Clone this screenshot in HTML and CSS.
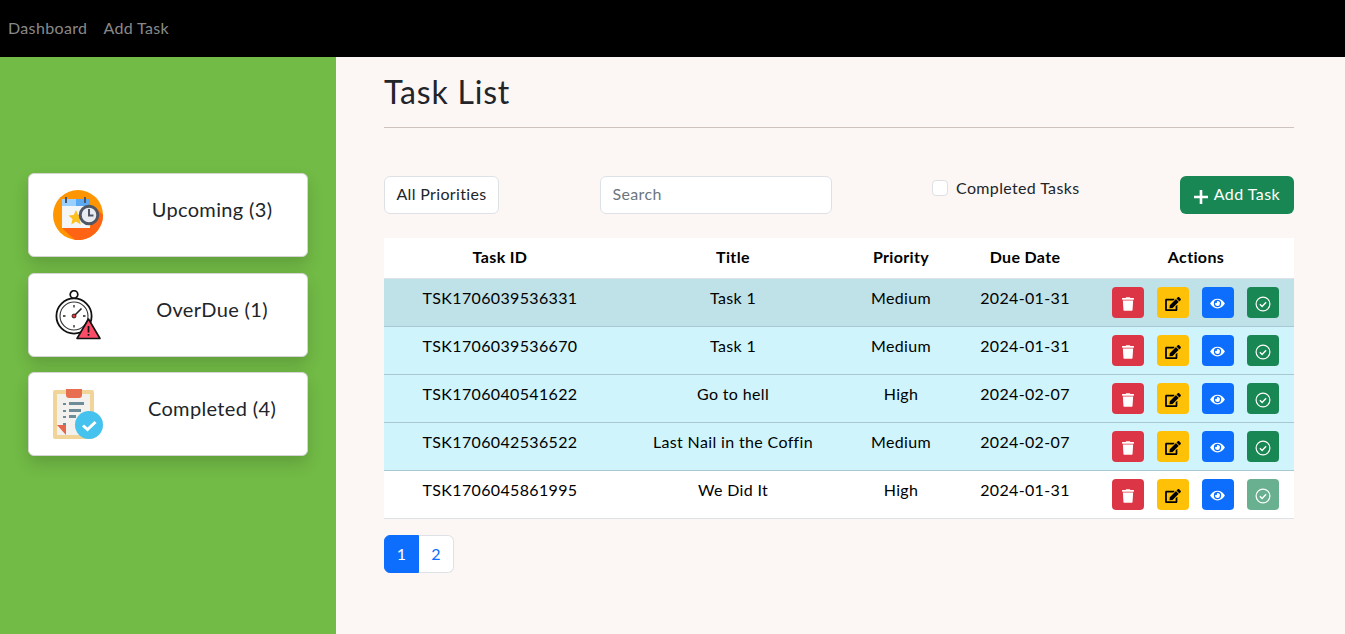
FILE: index.html
```html
<!DOCTYPE HTML>
<html>
	<head>
		<title>Task List</title>
		<link rel="stylesheet" href="styles.css">
	</head>
	<body>
		<svg class="sprites" width="0" height="0">
			<symbol id="ic-trash" viewBox="0 0 448 512"><path d="M432 32H312l-9.4-18.7A24 24 0 0 0 281.1 0H166.8a23.72 23.72 0 0 0-21.4 13.3L136 32H16A16 16 0 0 0 0 48v32a16 16 0 0 0 16 16h416a16 16 0 0 0 16-16V48a16 16 0 0 0-16-16zM53.2 467a48 48 0 0 0 47.9 45h245.8a48 48 0 0 0 47.9-45L416 128H32z"/></symbol>
			<symbol id="ic-edit" viewBox="0 0 576 512"><path d="M402.6 83.2l90.2 90.2c3.8 3.8 3.8 10 0 13.8L274.4 405.6l-92.8 10.3c-12.4 1.4-22.9-9.1-21.5-21.5l10.3-92.8L388.8 83.2c3.8-3.8 10-3.8 13.8 0zm162-22.9l-48.8-48.8c-15.2-15.2-39.9-15.2-55.2 0l-35.4 35.4c-3.8 3.8-3.8 10 0 13.8l90.2 90.2c3.8 3.8 10 3.8 13.8 0l35.4-35.4c15.2-15.3 15.2-40 0-55.2zM384 346.2V448H64V128h229.8c3.2 0 6.2-1.3 8.5-3.5l40-40c7.6-7.6 2.2-20.5-8.5-20.5H48C21.5 64 0 85.5 0 112v352c0 26.5 21.5 48 48 48h352c26.5 0 48-21.5 48-48V306.2c0-10.7-12.9-16-20.5-8.5l-40 40c-2.2 2.3-3.5 5.3-3.5 8.5z"/></symbol>
			<symbol id="ic-eye" viewBox="0 0 576 512"><path d="M572.52 241.4C518.29 135.59 410.93 64 288 64S57.68 135.64 3.48 241.41a32.35 32.35 0 0 0 0 29.19C57.71 376.41 165.07 448 288 448s230.32-71.64 284.52-177.41a32.35 32.35 0 0 0 0-29.19zM288 400a144 144 0 1 1 144-144 143.93 143.93 0 0 1-144 144zm0-240a95.31 95.31 0 0 0-25.31 3.79 47.85 47.85 0 0 1-66.9 66.9A95.78 95.78 0 1 0 288 160z"/></symbol>
			<symbol id="ic-check" viewBox="0 0 16 16"><circle cx="8" cy="8" r="6.9" fill="none" stroke="currentColor" stroke-width="1.2"/><path d="M4.9 8.2l2.2 2.2 4-4.2" fill="none" stroke="currentColor" stroke-width="1.4"/></symbol>
		</svg>

		<nav class="topbar">
			<a href="#">Dashboard</a>
			<a href="#">Add Task</a>
		</nav>

		<div class="layout">
			<aside class="sidebar">
				<div class="stat-card">
					<svg class="stat-icon" viewBox="0 0 50 50">
						<circle cx="25" cy="25" r="25" fill="#ff9500"/>
						<path d="M9 38L22 50A25 25 0 0 0 50 25L42 17L37 38z" fill="#ff6414"/>
						<rect x="9" y="9" width="28" height="29" fill="#f4f5f7"/>
						<rect x="9" y="9" width="14" height="7" fill="#9ad0ff"/>
						<rect x="23" y="9" width="14" height="7" fill="#5aa9f2"/>
						<rect x="12" y="7" width="2" height="6" fill="#4a5568"/>
						<rect x="31" y="7" width="2" height="6" fill="#4a5568"/>
						<path d="M23 20l2.200 5 5.300.5-4 3.600 1.200 5.300-4.700-2.800-4.700 2.800 1.200-5.300-4-3.600 5.300-.5z" fill="#fdbf1e"/>
						<circle cx="36" cy="25" r="8.800" fill="#e8ecf0" stroke="#4e5763" stroke-width="3"/>
						<path d="M36 19v6.500h4.500" fill="none" stroke="#4e5763" stroke-width="2"/>
					</svg>
					<span class="stat-label">Upcoming (3)</span>
				</div>
				<div class="stat-card">
					<svg class="stat-icon" viewBox="0 0 50 50">
						<circle cx="21" cy="4.500" r="3.800" fill="#fff" stroke="#111" stroke-width="1.700"/>
						<circle cx="21" cy="26" r="17.600" fill="#fff" stroke="#111" stroke-width="1.800"/>
						<circle cx="21" cy="26" r="14" fill="#fff" stroke="#333" stroke-width="1.100"/>
						<path d="M21 15v2.500M21 35v2.500M10 26h2.500M30 26h2.500" stroke="#222" stroke-width="1.300"/>
						<path d="M21 26l7.500-7.500" stroke="#222" stroke-width="1.600"/>
						<circle cx="21" cy="26" r="2" fill="#e33" stroke="#111" stroke-width=".8"/>
						<path d="M35.500 29L47 48.500H24z" fill="#fb4d67" stroke="#111" stroke-width="1.600" stroke-linejoin="round"/>
						<path d="M35.500 36v6.500M35.500 44v1.800" stroke="#111" stroke-width="1.700"/>
					</svg>
					<span class="stat-label">OverDue (1)</span>
				</div>
				<div class="stat-card">
					<svg class="stat-icon" viewBox="0 0 50 50">
						<rect x="0" y="1" width="41" height="49" rx="2" fill="#f1d498"/>
						<rect x="4" y="5" width="33" height="41" fill="#f3f1ee"/>
						<path d="M13 0h16v6a3 3 0 0 1-3 3H16a3 3 0 0 1-3-3z" fill="#e86e52"/>
						<path d="M10 14h3v2h-3zM10 21h3v2h-3zM10 27h3v2h-3zM10 34h3v2h-3z" fill="#6d8c9a"/>
						<path d="M16 13h15v3H16zM16 20h12v3H16zM16 26h7v3h-7z" fill="#6d8c9a"/>
						<path d="M4 36h9v10z" fill="#e5664d"/>
						<circle cx="36" cy="36" r="14" fill="#46c2ee"/>
						<path d="M30 36.500l4.500 4 8-7.500" fill="none" stroke="#fff" stroke-width="3"/>
					</svg>
					<span class="stat-label">Completed (4)</span>
				</div>
			</aside>

			<main class="content">
				<h1 class="page-title">Task List</h1>
				<hr class="rule">

				<div class="toolbar">
					<button class="plain-btn">All Priorities</button>
					<input class="search" type="text" placeholder="Search">
					<label class="check-line"><span class="check-box"></span>Completed Tasks</label>
					<button class="add-btn"><svg class="plus" viewBox="0 0 14 14"><path d="M7 0v14M0 7h14"/></svg>Add Task</button>
				</div>

				<table class="tasks">
					<colgroup>
						<col class="c-id"><col class="c-title"><col class="c-pri"><col class="c-due"><col>
					</colgroup>
					<thead>
						<tr><th>Task ID</th><th>Title</th><th>Priority</th><th>Due Date</th><th>Actions</th></tr>
					</thead>
					<tbody>
						<tr class="row-hover">
							<td>TSK1706039536331</td><td>Task 1</td><td>Medium</td><td>2024-01-31</td>
							<td><div class="actions">
								<button class="act red"><svg class="i-trash"><use href="#ic-trash"/></svg></button>
								<button class="act yellow"><svg class="i-edit"><use href="#ic-edit"/></svg></button>
								<button class="act blue"><svg class="i-eye"><use href="#ic-eye"/></svg></button>
								<button class="act green"><svg class="i-check"><use href="#ic-check"/></svg></button>
							</div></td>
						</tr>
						<tr class="row-info">
							<td>TSK1706039536670</td><td>Task 1</td><td>Medium</td><td>2024-01-31</td>
							<td><div class="actions">
								<button class="act red"><svg class="i-trash"><use href="#ic-trash"/></svg></button>
								<button class="act yellow"><svg class="i-edit"><use href="#ic-edit"/></svg></button>
								<button class="act blue"><svg class="i-eye"><use href="#ic-eye"/></svg></button>
								<button class="act green"><svg class="i-check"><use href="#ic-check"/></svg></button>
							</div></td>
						</tr>
						<tr class="row-info">
							<td>TSK1706040541622</td><td>Go to hell</td><td>High</td><td>2024-02-07</td>
							<td><div class="actions">
								<button class="act red"><svg class="i-trash"><use href="#ic-trash"/></svg></button>
								<button class="act yellow"><svg class="i-edit"><use href="#ic-edit"/></svg></button>
								<button class="act blue"><svg class="i-eye"><use href="#ic-eye"/></svg></button>
								<button class="act green"><svg class="i-check"><use href="#ic-check"/></svg></button>
							</div></td>
						</tr>
						<tr class="row-info">
							<td>TSK1706042536522</td><td>Last Nail in the Coffin</td><td>Medium</td><td>2024-02-07</td>
							<td><div class="actions">
								<button class="act red"><svg class="i-trash"><use href="#ic-trash"/></svg></button>
								<button class="act yellow"><svg class="i-edit"><use href="#ic-edit"/></svg></button>
								<button class="act blue"><svg class="i-eye"><use href="#ic-eye"/></svg></button>
								<button class="act green"><svg class="i-check"><use href="#ic-check"/></svg></button>
							</div></td>
						</tr>
						<tr>
							<td>TSK1706045861995</td><td>We Did It</td><td>High</td><td>2024-01-31</td>
							<td><div class="actions">
								<button class="act red"><svg class="i-trash"><use href="#ic-trash"/></svg></button>
								<button class="act yellow"><svg class="i-edit"><use href="#ic-edit"/></svg></button>
								<button class="act blue"><svg class="i-eye"><use href="#ic-eye"/></svg></button>
								<button class="act green done"><svg class="i-check"><use href="#ic-check"/></svg></button>
							</div></td>
						</tr>
					</tbody>
				</table>

				<div class="pager">
					<a class="page on" href="#">1</a>
					<a class="page" href="#">2</a>
				</div>
			</main>
		</div>
	</body>
</html>
```

FILE: styles.css
```css
* {box-sizing:border-box;}
body {margin:0; height:634px; overflow:hidden; font:16px/24px "Lato", "Open Sans", sans-serif; letter-spacing:.35px; color:#212529; background-color:#fcf7f4;}

.sprites {position:absolute;}

.topbar {display:flex; gap:16px; height:57px; padding:16px 8px; background-color:#000;}
.topbar a {color:rgba(255,255,255,.55); text-decoration:none;}

.layout {display:flex; height:577px;}

.sidebar {width:336px; padding:116px 28px 0; background-color:#72bb46;}

.stat-card {display:flex; align-items:flex-start; height:84px; margin-bottom:15.500px; padding:16px 24px 0; background-color:#fff; border:1px solid #d5d5d5; border-radius:6px; box-shadow:0 8px 16px rgba(0,0,0,.15);}
.stat-icon {width:50px; height:50px; flex:none;}
.stat-label {flex:1; padding:7px 0 0 14px; margin-right:-24px; text-align:center; font-size:20px; color:#212529;}

.content {flex:1; padding:0 51px 0 48px;}

.page-title {margin:16px 0 0; font-size:32px; line-height:38px; font-weight:400; letter-spacing:.8px;}
.rule {height:1px; margin:16px 0 48px; border:0; background-color:#cdc4bf;}

.toolbar {display:flex; justify-content:space-between; align-items:flex-start; margin-bottom:24px;}
.plain-btn {width:115px; height:38px; padding:0 0 2px; font:inherit; letter-spacing:inherit; color:#212529; background-color:#fff; border:1px solid #dee2e6; border-radius:6px;}
.search {width:232px; height:38px; padding:3px 12px 7px; font:inherit; letter-spacing:inherit; color:#212529; background-color:#fff; border:1px solid #dee2e6; border-radius:6px;}
.search::placeholder {color:#6c757d;}
.check-line {display:flex; align-items:flex-start; gap:8px; color:#212529;}
.check-box {width:16px; height:16px; margin-top:4px; background-color:#fff; border:1px solid #dee2e6; border-radius:4px;}
.add-btn {display:flex; align-items:center; justify-content:center; width:114px; height:38px; padding:0 0 2px; font:inherit; letter-spacing:.45px; color:#fff; background-color:#198754; border:0; border-radius:6px;}
.plus {width:14px; height:14px; margin:5px 6px 0 0; fill:none; stroke:#fff; stroke-width:2.600;}

.tasks {width:100%; border-collapse:collapse; table-layout:fixed; color:#000;}
.c-id {width:232px;}
.c-title {width:234px;}
.c-pri {width:102px;}
.c-due {width:146px;}
.tasks th {height:40px; padding:7px 8px 8px; text-align:center; vertical-align:top; font-weight:700; background-color:#fff; border-bottom:1px solid #dee2e6;}
.tasks td {height:48px; padding:7px 8px 8px; text-align:center; vertical-align:top; background-color:#fff; border-bottom:1px solid #dee2e6;}
.row-hover td {background-color:#bfe1e8; border-bottom-color:#a8c9d1;}
.row-info td {background-color:#cff4fc; border-bottom-color:#a8c9d1;}

.actions {display:flex; justify-content:center; gap:13px; margin:1px 2px 0 0;}
.act {display:flex; align-items:center; justify-content:center; width:32px; height:31px; padding:3px 0 0; border:0; border-radius:4px;}
.red {background-color:#dc3545; color:#fff;}
.yellow {background-color:#ffc107; color:#000;}
.blue {background-color:#0d6efd; color:#fff;}
.green {background-color:#198754; color:#fff;}
.done {opacity:.65;}
.act svg {fill:currentColor;}
.i-trash {width:12px; height:14px;}
.i-edit {width:16px; height:14px;}
.i-eye {width:15px; height:13px;}
.i-check {width:16px; height:16px;}

.pager {display:flex; margin-top:16px;}
.page {width:35px; height:38px; line-height:36px; text-align:center; text-decoration:none; color:#0d6efd; background-color:#fff; border:1px solid #dee2e6; border-left:0; border-radius:0 6px 6px 0;}
.page.on {color:#fff; background-color:#0d6efd; border:1px solid #0d6efd; border-radius:6px 0 0 6px;}
```
